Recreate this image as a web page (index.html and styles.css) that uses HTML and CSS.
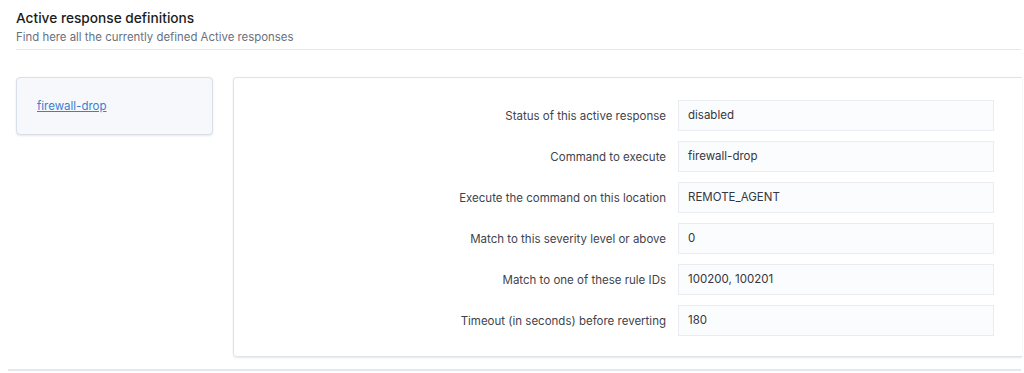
FILE: index.html
```html
<html>
    <head>
        <link rel="stylesheet" href="styles.css">
    </head>
    <body>
        <div class="page_header">
            <h2 class="page_title">Active response definitions</h2>
            <p class="page_subtitle">Find here all the currently defined Active responses</p>
        </div>
        <div class="ar_layout">
            <div class="ar_list">
                <a href="#" class="ar_link">firewall-drop</a>
            </div>
            <div class="ar_detail">
                <label class="ar_label">Status of this active response</label>
                <div class="ar_value">disabled</div>
                <label class="ar_label">Command to execute</label>
                <div class="ar_value">firewall-drop</div>
                <label class="ar_label">Execute the command on this location</label>
                <div class="ar_value">REMOTE_AGENT</div>
                <label class="ar_label">Match to this severity level or above</label>
                <div class="ar_value">0</div>
                <label class="ar_label">Match to one of these rule IDs</label>
                <div class="ar_value">100200, 100201</div>
                <label class="ar_label">Timeout (in seconds) before reverting</label>
                <div class="ar_value">180</div>
            </div>
        </div>
        <div class="page_footer"></div>
    </body>
</html>
```

FILE: styles.css
```css
body {
    margin: 0;
    font-family: "Inter", "Noto Sans", sans-serif;
    background: #ffffff;
    color: #343741;
    overflow: hidden;
}

.page_header {
    margin: 0 3px 0 16px;
    padding-top: 9px;
    padding-bottom: 4px;
    border-bottom: 1px solid #e3e7ee;
}

.page_title {
    margin: 0;
    font-size: 13.7px;
    font-weight: 500;
    line-height: 18px;
    color: #1a1c21;
}

.page_subtitle {
    margin: 3px 0 0 0;
    font-size: 11.4px;
    line-height: 15px;
    color: #69707d;
}

.ar_layout {
    display: flex;
    align-items: flex-start;
    gap: 20px;
    margin: 27px 0 0 16px;
    width: 1006px;
}

.ar_list {
    box-sizing: border-box;
    width: 197px;
    height: 58px;
    padding: 19px 20px;
    background: #f7f8fc;
    border: 1px solid #d9dfe9;
    border-radius: 4px;
    box-shadow: 0 1px 2px rgba(152, 162, 179, 0.25);
}

.ar_link {
    font-size: 11.5px;
    line-height: 18px;
    color: #3b7fcf;
    text-decoration: underline;
}

.ar_detail {
    flex: 1;
    display: grid;
    grid-template-columns: 1fr 316px;
    column-gap: 12px;
    row-gap: 10px;
    align-items: center;
    padding: 22px 28px 20px 20px;
    border: 1px solid #dfe4ec;
    border-right: none;
    border-radius: 4px 0 0 4px;
    box-shadow: 0 1px 2px rgba(152, 162, 179, 0.25);
}

.ar_label {
    text-align: right;
    font-size: 11.5px;
    color: #3f434c;
}

.ar_value {
    box-sizing: border-box;
    height: 31px;
    padding: 0 9px;
    font-size: 11.5px;
    line-height: 29px;
    color: #343741;
    background: #fbfcfd;
    border: 1px solid #e9ecf1;
}

.page_footer {
    margin: 12px 3px 0 8px;
    border-top: 2px solid #e3e7ee;
}
```
